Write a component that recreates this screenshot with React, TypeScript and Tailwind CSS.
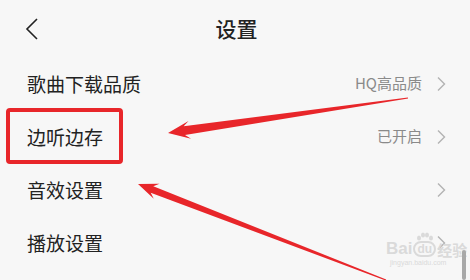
import React from "react";

type Row = { label: string; value?: string };

const rows: Row[] = [
  { label: "歌曲下载品质", value: "HQ高品质" },
  { label: "边听边存", value: "已开启" },
  { label: "音效设置" },
  { label: "播放设置" },
];

/** tapered arrow: thin at the tail, a notched head at the tip */
function arrowPoints(
  tail: [number, number],
  tip: [number, number],
  headLen: number,
  headHalf: number,
  shaftHalf: number
) {
  const dx = tip[0] - tail[0];
  const dy = tip[1] - tail[1];
  const len = Math.hypot(dx, dy);
  const ux = dx / len;
  const uy = dy / len;
  const nx = -uy;
  const ny = ux;
  const bx = tip[0] - ux * headLen;
  const by = tip[1] - uy * headLen;
  const nb = tip[0] - ux * headLen * 0.75;
  const nby = tip[1] - uy * headLen * 0.75;
  const pts = [
    [tail[0] + nx * 0.6, tail[1] + ny * 0.6],
    [nb + nx * shaftHalf, nby + ny * shaftHalf],
    [bx + nx * headHalf, by + ny * headHalf],
    [tip[0], tip[1]],
    [bx - nx * headHalf, by - ny * headHalf],
    [nb - nx * shaftHalf, nby - ny * shaftHalf],
    [tail[0] - nx * 0.6, tail[1] - ny * 0.6],
  ];
  return pts.map((p) => `${p[0].toFixed(1)},${p[1].toFixed(1)}`).join(" ");
}

function Chevron() {
  return (
    <svg width="10" height="16" viewBox="0 0 10 16" fill="none">
      <path d="M2 1.5 L8.5 8 L2 14.5" stroke="#b3b3b3" strokeWidth="1.4" />
    </svg>
  );
}

export default function App() {
  return (
    <div
      className="relative w-[470px] h-[280px] overflow-hidden bg-[#f7f7f7] text-[#222]"
      style={{ fontFamily: '"Noto Sans CJK SC", "Noto Sans", sans-serif' }}
    >
      {/* header */}
      <div className="h-[57px] flex items-center px-[24px] relative">
        <svg width="16" height="24" viewBox="0 0 16 24" fill="none">
          <path d="M13 2 L3 12 L13 22" stroke="#222" strokeWidth="1.6" />
        </svg>
        <div className="absolute inset-x-0 top-0 h-[57px] flex items-center justify-center pl-[3px] text-[21px] font-medium">
          设置
        </div>
      </div>

      {/* list */}
      <div className="flex flex-col">
        {rows.map((r) => (
          <div key={r.label} className="h-[53px] flex items-center pl-[27px] pr-[24px]">
            <div className="flex-1 text-[19px] leading-none">{r.label}</div>
            {r.value && (
              <div className="text-[15px] text-[#8a8a8a] mr-[14px]">{r.value}</div>
            )}
            <Chevron />
          </div>
        ))}
      </div>

      {/* red box annotation */}
      <div className="absolute left-[6px] top-[108px] w-[117px] h-[56px] border-[4px] border-[#e8262a] rounded-[4px]" />

      {/* watermark */}
      <div className="absolute left-[386px] top-[232px] flex flex-col items-start text-[#dadada] leading-none">
        <div className="flex items-end gap-[1px] text-[17px] font-semibold">
          <span style={{ fontFamily: '"Liberation Sans", sans-serif' }}>Bai</span>
          <span className="flex flex-col items-center">
            <svg width="18" height="9" viewBox="0 0 18 9" fill="#dadada">
              <ellipse cx="3" cy="6" rx="2" ry="2.5" />
              <ellipse cx="7" cy="3" rx="2" ry="2.5" />
              <ellipse cx="11" cy="3" rx="2" ry="2.5" />
              <ellipse cx="15" cy="6" rx="2" ry="2.5" />
            </svg>
            <span
              className="rounded-full border-[2px] border-[#dadada] px-[2px] text-[12px]"
              style={{ fontFamily: '"Liberation Sans", sans-serif' }}
            >
              du
            </span>
          </span>
          <span className="text-[15px]">经验</span>
        </div>
        <div
          className="text-[7px] mt-[2px] ml-[4px]"
          style={{ fontFamily: '"Liberation Sans", sans-serif' }}
        >
          jingyan.baidu.com
        </div>
      </div>

      {/* scrollbar */}
      <div className="absolute left-[462px] top-[250px] w-[4px] h-[30px] bg-[#a8a8a8] rounded-[2px]" />

      {/* arrows */}
      <svg className="absolute inset-0" width="470" height="280" viewBox="0 0 470 280">
        <polygon points={arrowPoints([408, 98], [168, 133], 22, 9, 4.5)} fill="#e8262a" />
        <polygon points={arrowPoints([386, 280], [138, 184], 20, 8, 3.5)} fill="#e8262a" />
      </svg>
    </div>
  );
}
